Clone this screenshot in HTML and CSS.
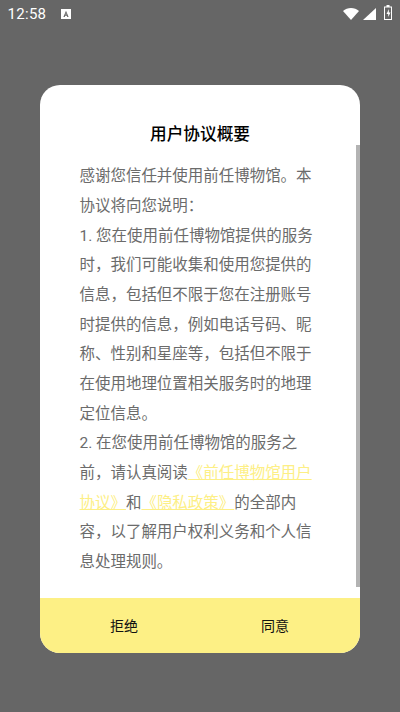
FILE: index.html
```html
<!DOCTYPE html>
<html lang="zh-CN">
<head>
<meta charset="utf-8">
<title>用户协议概要</title>
<link rel="stylesheet" href="styles.css">
</head>
<body>
<div class="status">
  <div class="status-left">
    <span class="time">12:58</span>
    <svg class="a-icon" width="10" height="10" viewBox="0 0 10 10"><path fill="#fff" fill-rule="evenodd" d="M0 0h10v10H0zM5 1.800 2.400 8h1.300l.5-1.300h1.600L6.300 8h1.300L5 1.800zM5 3.900l.5 1.700h-1z"/></svg>
  </div>
  <div class="status-right">
    <svg class="wifi" width="16" height="12" viewBox="0 0 16 12"><path fill="#fff" d="M0 3C2.200 1.100 5 0 8 0s5.800 1.100 8 3l-8 9z"/></svg>
    <svg class="signal" width="13" height="12" viewBox="0 0 13 12"><path fill="#fff" d="M13 0v12H0z"/></svg>
    <svg class="battery" width="8" height="15" viewBox="0 0 8 15"><path fill="#fff" fill-rule="evenodd" d="M2.500 0h3v1.500H8V15H0V1.500h2.500zM1 2.500V14h6V2.500zM5 4 2.500 9h1.700v3L6.500 7.500H4.800z"/></svg>
  </div>
</div>
<main class="dialog">
  <div class="scrollbar"></div>
  <div class="content">
    <h1 class="title">用户协议概要</h1>
    <p class="text">感谢您信任并使用前任博物馆。本协议将向您说明：<br>1. 您在使用前任博物馆提供的服务时，我们可能收集和使用您提供的信息，包括但不限于您在注册账号时提供的信息，例如电话号码、昵称、性别和星座等，包括但不限于在使用地理位置相关服务时的地理定位信息。<br>2. 在您使用前任博物馆的服务之前，请认真阅读<a class="link">《前任博物馆用户协议》</a>和<a class="link">《隐私政策》</a>的全部内容，以了解用户权利义务和个人信息处理规则。</p>
  </div>
  <div class="actions">
    <button class="action">拒绝</button>
    <button class="action">同意</button>
  </div>
</main>
</body>
</html>
```
FILE: styles.css
```css
* { box-sizing: border-box; }
html, body { margin: 0; height: 712px; overflow: hidden; }
body {
  background: #666;
  font-family: Roboto, "Noto Sans CJK SC", sans-serif;
  display: flex;
  flex-direction: column;
  align-items: center;
}
.status {
  width: 100%;
  height: 85px;
  padding: 5px 8px 0 7.500px;
  display: flex;
  justify-content: space-between;
  align-items: flex-start;
  color: #fff;
}
.status-left { display: flex; align-items: center; gap: 15px; height: 18px; }
.time { font-size: 15px; line-height: 18px; letter-spacing: 0.3px; }
.status-right { display: flex; align-items: flex-end; height: 15px; }
.signal { margin-left: 4px; }
.battery { margin-left: 8px; }
.dialog {
  position: relative;
  width: 320px;
  height: 568px;
  background: #fff;
  border-radius: 20px;
  overflow: hidden;
  display: flex;
  flex-direction: column;
}
.content { flex: 1; padding: 0 40px; }
.title {
  margin: 0;
  padding-top: 39px;
  font-size: 16.67px;
  line-height: 22px;
  font-weight: 500;
  color: #000;
  text-align: center;
}
.text {
  margin: 16.300px -2px 0 -0.500px;
  font-size: 15.47px;
  line-height: 29.65px;
  color: #6b6b6b;
}
.link { color: #fdef85; text-decoration: underline; }
.actions {
  height: 55px;
  background: #fdf085;
  padding: 0 9.500px 2px 8.500px;
  display: grid;
  grid-template-columns: 1fr 1fr;
}
.action {
  border: 0;
  background: none;
  padding: 0;
  font: inherit;
  font-size: 14px;
  color: #111;
}
.scrollbar {
  position: absolute;
  right: 0;
  top: 60px;
  width: 4px;
  height: 442px;
  background: #b3b3b3;
}
```
